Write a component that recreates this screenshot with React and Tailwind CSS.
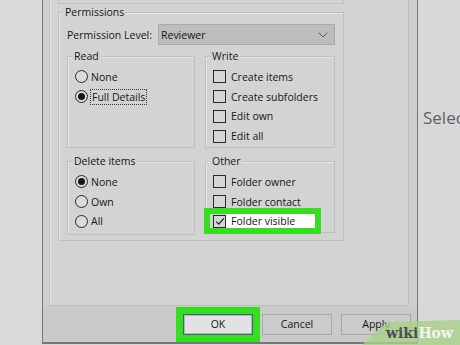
import React from "react";

function Radio({ checked }) {
  return (
    <span className="w-[13px] h-[13px] rounded-full border border-[#262626] bg-[#dadada] flex items-center justify-center shrink-0">
      {checked && <span className="w-[7px] h-[7px] rounded-full bg-[#161616]" />}
    </span>
  );
}

function Check({ checked }) {
  return (
    <span className="w-[13px] h-[13px] border border-[#2a2a2a] bg-[#d6d6d6] flex items-center justify-center shrink-0">
      {checked && (
        <svg width="10" height="9" viewBox="0 0 10 9">
          <path d="M1.2 4.6 L3.8 7.2 L8.8 1.4" fill="none" stroke="#1e1e1e" strokeWidth="1.2" />
        </svg>
      )}
    </span>
  );
}

function Group({ title, children, className = "" }) {
  return (
    <fieldset className={`border border-[#bfbfbf] shadow-[inset_1px_1px_0_#e4e4e4] ${className}`}>
      <legend className="ml-[4px] px-[2px] leading-[14px] bg-[#d3d3d3]">{title}</legend>
      {children}
    </fieldset>
  );
}

function RadioRow({ label, checked, focus }) {
  return (
    <div className="h-[19.75px] flex items-center gap-[3px]">
      <Radio checked={checked} />
      {focus ? (
        <span className="-ml-[1px] border border-dotted border-[#3a3a3a] px-[1px] leading-[14px]">{label}</span>
      ) : (
        <span className="leading-[14px]">{label}</span>
      )}
    </div>
  );
}

function CheckRow({ label, checked }) {
  return (
    <div className="h-[19.75px] flex items-center gap-[5px]">
      <Check checked={checked} />
      <span className="leading-[14px]">{label}</span>
    </div>
  );
}

function Button({ children, primary }) {
  return (
    <div
      className={
        primary
          ? "w-[70px] h-[21px] flex items-center justify-center bg-[#e2e2e2] border border-[#4a6078] shadow-[inset_0_0_0_1px_#a9b8c6] outline-[7px] outline-solid outline-[#35df20]"
          : "w-[70px] h-[21px] flex items-center justify-center bg-[#cbcbcb] border border-[#a9a9a9]"
      }
    >
      {children}
    </div>
  );
}

export default function App() {
  return (
    <div className="relative w-[460px] h-[345px] overflow-hidden flex bg-[#d7d7d7] font-['Open_Sans',sans-serif] text-[10.5px] text-[#161616]">
      {/* left background */}
      <div className="w-[42px] shrink-0 h-full bg-[#d9d9d9]" />

      {/* dialog */}
      <div className="w-[376px] shrink-0 h-[344px] flex flex-col border-l border-r border-b-2 border-[#777777] bg-[#cfcfcf]">
        {/* tab panel */}
        <div className="ml-[6px] w-[360px] h-[306px] border-l border-r border-b border-[#c0c0c0] shadow-[inset_1px_0_0_#e2e2e2] bg-[#d3d3d3] flex flex-col">
          <div className="ml-[8px] w-[286px] h-[4px] border-l border-r border-b border-[#c2c2c2]" />
          <fieldset className="ml-[8px] mt-[1px] w-[286px] border border-[#bfbfbf] shadow-[inset_1px_1px_0_#e4e4e4]">
            <legend className="ml-[4px] px-[2px] leading-[14px] bg-[#d3d3d3]">Permissions</legend>
            <div className="pt-[5px] pl-[8px] pr-[8px] pb-[5px]">
              <div className="h-[21px] flex items-center justify-between">
                <span className="leading-[14px]">Permission Level:</span>
                <div className="w-[177px] h-[21px] bg-[#bdbdbd] border border-[#aaaaaa] flex items-center justify-between pl-[2px] pr-[6px]">
                  <span className="leading-[14px]">Reviewer</span>
                  <svg width="10" height="6" viewBox="0 0 10 6">
                    <path d="M0.8 0.8 L5 5 L9.2 0.8" fill="none" stroke="#555" strokeWidth="1" />
                  </svg>
                </div>
              </div>
              <div className="mt-[4px] grid grid-cols-[128px_130px] gap-x-[10px] gap-y-[6px]">
                <Group title="Read">
                  <div className="pt-[4px] pl-[7px] pb-[1px]">
                    <RadioRow label="None" />
                    <RadioRow label="Full Details" checked focus />
                  </div>
                </Group>
                <Group title="Write">
                  <div className="pt-[4px] pl-[7px] pb-[1px]">
                    <CheckRow label="Create items" />
                    <CheckRow label="Create subfolders" />
                    <CheckRow label="Edit own" />
                    <CheckRow label="Edit all" />
                  </div>
                </Group>
                <Group title="Delete items">
                  <div className="pt-[4px] pl-[7px] pb-[3px]">
                    <RadioRow label="None" checked />
                    <RadioRow label="Own" />
                    <RadioRow label="All" />
                  </div>
                </Group>
                <Group title="Other" className="mb-[2px]">
                  <div className="pt-[4px] pl-[7px] pb-[1px]">
                    <CheckRow label="Folder owner" />
                    <CheckRow label="Folder contact" />
                    <div className="h-[19.75px] flex items-center">
                      <span className="-ml-[3px] pl-[3px] w-[105px] h-[14px] flex items-center outline-[6px] outline-solid outline-[#35df20]">
                        <Check checked />
                        <span className="flex-1 h-[14px] bg-white pl-[5px] leading-[14px]">Folder visible</span>
                      </span>
                    </div>
                  </div>
                </Group>
              </div>
            </div>
          </fieldset>
        </div>

        {/* button row */}
        <div className="flex-1 bg-[#cacaca] flex justify-end items-start pt-[8px] pr-[6px] gap-[9px]">
          <Button primary>OK</Button>
          <Button>Cancel</Button>
          <Button>Apply</Button>
        </div>
      </div>

      {/* right background */}
      <div className="flex-1 min-w-0 overflow-hidden h-full bg-[#d8d8d8] pl-[5px] pt-[106px]">
        <span className="whitespace-nowrap text-[17px] leading-[24px] text-[#606060]">Select</span>
      </div>

      {/* wikiHow watermark */}
      <div className="absolute right-0 bottom-0 w-[98px] h-[28px]">
        <svg className="absolute inset-0" width="98" height="28" viewBox="0 0 98 28">
          <path d="M0 28 C8 20 16 12 26 5 L98 3 L98 28 Z" fill="#a8d28a" fillOpacity="0.8" />
        </svg>
        <div className="absolute left-[24px] top-[7px] font-['DejaVu_Serif',serif] font-bold text-[14px] leading-[18px] whitespace-nowrap">
          <span className="text-[#4e4e4e]">wiki</span>
          <span className="text-[#f4f4f4]">How</span>
        </div>
      </div>
    </div>
  );
}
